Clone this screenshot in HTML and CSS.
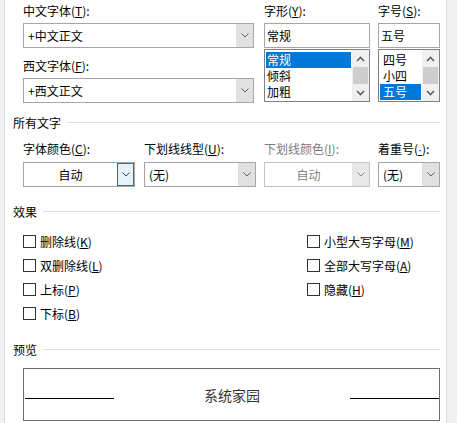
FILE: index.html
```html
<!DOCTYPE html>
<html lang="zh-CN">
<head>
<meta charset="utf-8">
<title>字体</title>
<link rel="stylesheet" href="styles.css">
</head>
<body>
<div class="window">
  <div class="edge-l"></div>
  <div class="content">
    <div class="fonts">
      <div class="col col-font">
        <div class="lbl">中文字体(<u>T</u>):</div>
        <div class="combo">
          <span class="combo-text">+中文正文</span>
          <span class="combo-btn"><svg width="8" height="5" viewBox="0 0 8 5"><polyline points="0.5,0.5 4,4 7.5,0.5" fill="none" stroke="#606060" stroke-width="1"/></svg></span>
        </div>
        <div class="lbl lbl-second">西文字体(<u>F</u>):</div>
        <div class="combo">
          <span class="combo-text">+西文正文</span>
          <span class="combo-btn"><svg width="8" height="5" viewBox="0 0 8 5"><polyline points="0.5,0.5 4,4 7.5,0.5" fill="none" stroke="#606060" stroke-width="1"/></svg></span>
        </div>
      </div>
      <div class="col col-style">
        <div class="lbl">字形(<u>Y</u>):</div>
        <div class="textbox">常规</div>
        <div class="list">
          <div class="items">
            <div class="item sel">常规</div>
            <div class="item">倾斜</div>
            <div class="item">加粗</div>
          </div>
          <div class="sb">
            <div class="sb-btn"><svg width="9" height="6" viewBox="0 0 9 6"><polyline points="1,5 4.5,1.5 8,5" fill="none" stroke="#606060" stroke-width="1.6"/></svg></div>
            <div class="sb-thumb"></div>
            <div class="sb-btn sb-down"><svg width="9" height="6" viewBox="0 0 9 6"><polyline points="1,1 4.5,4.5 8,1" fill="none" stroke="#606060" stroke-width="1.6"/></svg></div>
          </div>
        </div>
      </div>
      <div class="col col-size">
        <div class="lbl">字号(<u>S</u>):</div>
        <div class="textbox">五号</div>
        <div class="list">
          <div class="items">
            <div class="item">四号</div>
            <div class="item">小四</div>
            <div class="item sel">五号</div>
          </div>
          <div class="sb">
            <div class="sb-btn"><svg width="9" height="6" viewBox="0 0 9 6"><polyline points="1,5 4.5,1.5 8,5" fill="none" stroke="#606060" stroke-width="1.6"/></svg></div>
            <div class="sb-thumb"></div>
            <div class="sb-btn sb-down"><svg width="9" height="6" viewBox="0 0 9 6"><polyline points="1,1 4.5,4.5 8,1" fill="none" stroke="#606060" stroke-width="1.6"/></svg></div>
          </div>
        </div>
      </div>
    </div>

    <div class="group-head head-all"><span>所有文字</span><i class="rule"></i></div>
    <div class="alltext">
      <div class="col c1">
        <div class="lbl">字体颜色(<u>C</u>):</div>
        <div class="combo">
          <span class="combo-text center">自动</span>
          <span class="combo-btn focus"><svg width="8" height="5" viewBox="0 0 8 5"><polyline points="0.5,0.5 4,4 7.5,0.5" fill="none" stroke="#404040" stroke-width="1"/></svg></span>
        </div>
      </div>
      <div class="col c2">
        <div class="lbl">下划线线型(<u>U</u>):</div>
        <div class="combo">
          <span class="combo-text">(无)</span>
          <span class="combo-btn"><svg width="8" height="5" viewBox="0 0 8 5"><polyline points="0.5,0.5 4,4 7.5,0.5" fill="none" stroke="#606060" stroke-width="1"/></svg></span>
        </div>
      </div>
      <div class="col c3">
        <div class="lbl disabled">下划线颜色(<u>I</u>):</div>
        <div class="combo combo-disabled">
          <span class="combo-text center">自动</span>
          <span class="combo-btn"><svg width="8" height="5" viewBox="0 0 8 5"><polyline points="0.5,0.5 4,4 7.5,0.5" fill="none" stroke="#8a8a8a" stroke-width="1"/></svg></span>
        </div>
      </div>
      <div class="col c4">
        <div class="lbl">着重号(<u class="latin">·</u>):</div>
        <div class="combo">
          <span class="combo-text">(无)</span>
          <span class="combo-btn"><svg width="8" height="5" viewBox="0 0 8 5"><polyline points="0.5,0.5 4,4 7.5,0.5" fill="none" stroke="#606060" stroke-width="1"/></svg></span>
        </div>
      </div>
    </div>

    <div class="group-head head-fx"><span>效果</span><i class="rule"></i></div>
    <div class="effects">
      <label class="chk"><span class="box"></span>删除线(<u>K</u>)</label>
      <label class="chk"><span class="box"></span>小型大写字母(<u>M</u>)</label>
      <label class="chk"><span class="box"></span>双删除线(<u>L</u>)</label>
      <label class="chk"><span class="box"></span>全部大写字母(<u>A</u>)</label>
      <label class="chk"><span class="box"></span>上标(<u>P</u>)</label>
      <label class="chk"><span class="box"></span>隐藏(<u>H</u>)</label>
      <label class="chk"><span class="box"></span>下标(<u>B</u>)</label>
    </div>

    <div class="group-head head-pv"><span>预览</span><i class="rule"></i></div>
    <div class="preview">
      <i class="pv-line"></i>
      <span class="pv-text">系统家园</span>
      <i class="pv-line"></i>
    </div>
  </div>
  <div class="edge-r"></div>
</div>
</body>
</html>
```

FILE: styles.css
```css
* { box-sizing: border-box; }
html, body { margin: 0; padding: 0; }
body {
  font-family: "Noto Sans CJK SC", "Noto Sans", sans-serif;
  font-size: 12px;
  color: #000;
  background: #f0f0f0;
}
u { text-decoration: underline; text-underline-offset: 1px; }
.latin { font-family: "Liberation Sans", sans-serif; }

.window { display: flex; width: 457px; height: 423px; overflow: hidden; }
.edge-l { width: 5px; background: #f0f0f0; border-right: 1px solid #dadada; }
.edge-r { width: 11px; background: #f0f0f0; border-left: 1px solid #dadada; }
.content {
  flex: 1;
  background: #fff;
  padding: 2px 6px 0 8px;
}

.lbl { line-height: 17px; height: 17px; margin-bottom: 4px; white-space: nowrap; }
.lbl-second { margin-top: 9px; }
.lbl.disabled { color: #7a7a7a; }

/* top font section */
.fonts { display: flex; margin-left: 10px; }
.col-font { width: 231px; }
.col-style { width: 106px; margin-left: 10px; }
.col-size { width: 62px; margin-left: 8px; }

.combo {
  display: flex;
  height: 25px;
  border: 1px solid #a6a6a6;
  background: #fff;
}
.combo-text { flex: 1; line-height: 23px; padding-left: 4px; white-space: nowrap; }
.combo-text.center { text-align: center; padding-left: 0; }
.combo-btn {
  width: 17px;
  background: #e1e1e1;
  display: flex;
  align-items: center;
  justify-content: center;
}
.combo-btn.focus { background: #e5f1fb; border: 1px solid #0078d7; }
.combo-disabled { border-color: #c4c4c4; color: #838383; }
.combo-disabled .combo-btn { background: #e8e8e8; }

.textbox {
  height: 25px;
  border: 1px solid #a6a6a6;
  line-height: 23px;
  padding-left: 2px;
}
.list {
  display: flex;
  height: 53px;
  margin-top: 1px;
  border: 1px solid #828282;
  overflow: hidden;
}
.items { flex: 1; padding: 2px 1px 0 1px; }
.item { height: 16px; line-height: 16px; padding-left: 1px; }
.item.sel { background: #0078d7; color: #fff; }
.col-size .item { padding-left: 3px; }

.sb { width: 17px; background: #f0f0f0; display: flex; flex-direction: column; }
.sb-btn { height: 17px; display: flex; align-items: center; justify-content: center; }
.sb-down { flex: 1; height: auto; }
.sb-thumb { height: 17px; margin: 0 1px; background: #cdcdcd; }

/* group headers */
.group-head { display: flex; align-items: center; line-height: 17px; height: 17px; }
.group-head .rule { flex: 1; height: 1px; background: #dcdcdc; margin-left: 6px; }
.head-all { margin-top: 11px; }
.head-fx { margin-top: 16px; }
.head-pv { margin-top: 16px; }

/* all text row */
.alltext { display: flex; margin-left: 10px; margin-top: 9px; }
.alltext .lbl { margin-bottom: 5px; }
.c1 { width: 112px; }
.c2 { width: 112px; margin-left: 9px; }
.c3 { width: 106px; margin-left: 8px; }
.c4 { width: 62px; margin-left: 8px; }
.c2 .combo-text, .c4 .combo-text { padding-left: 4px; }

/* effects */
.effects {
  display: grid;
  grid-template-columns: 284px auto;
  grid-auto-rows: 24px;
  margin-left: 10px;
  margin-top: 9px;
}
.chk { display: flex; align-items: center; white-space: nowrap; }
.box {
  width: 13px;
  height: 13px;
  border: 1px solid #333;
  background: #fff;
  margin-right: 4px;
}

/* preview */
.preview {
  display: flex;
  align-items: center;
  justify-content: space-between;
  margin: 10px 0 0 10px;
  height: 53px;
  border: 1px solid #6e6e6e;
  padding: 0 0 0 1px;
}
.pv-line { width: 89px; height: 1px; background: #000; margin-top: 8px; }
.pv-text { font-size: 14px; color: #333; line-height: 20px; }
```
